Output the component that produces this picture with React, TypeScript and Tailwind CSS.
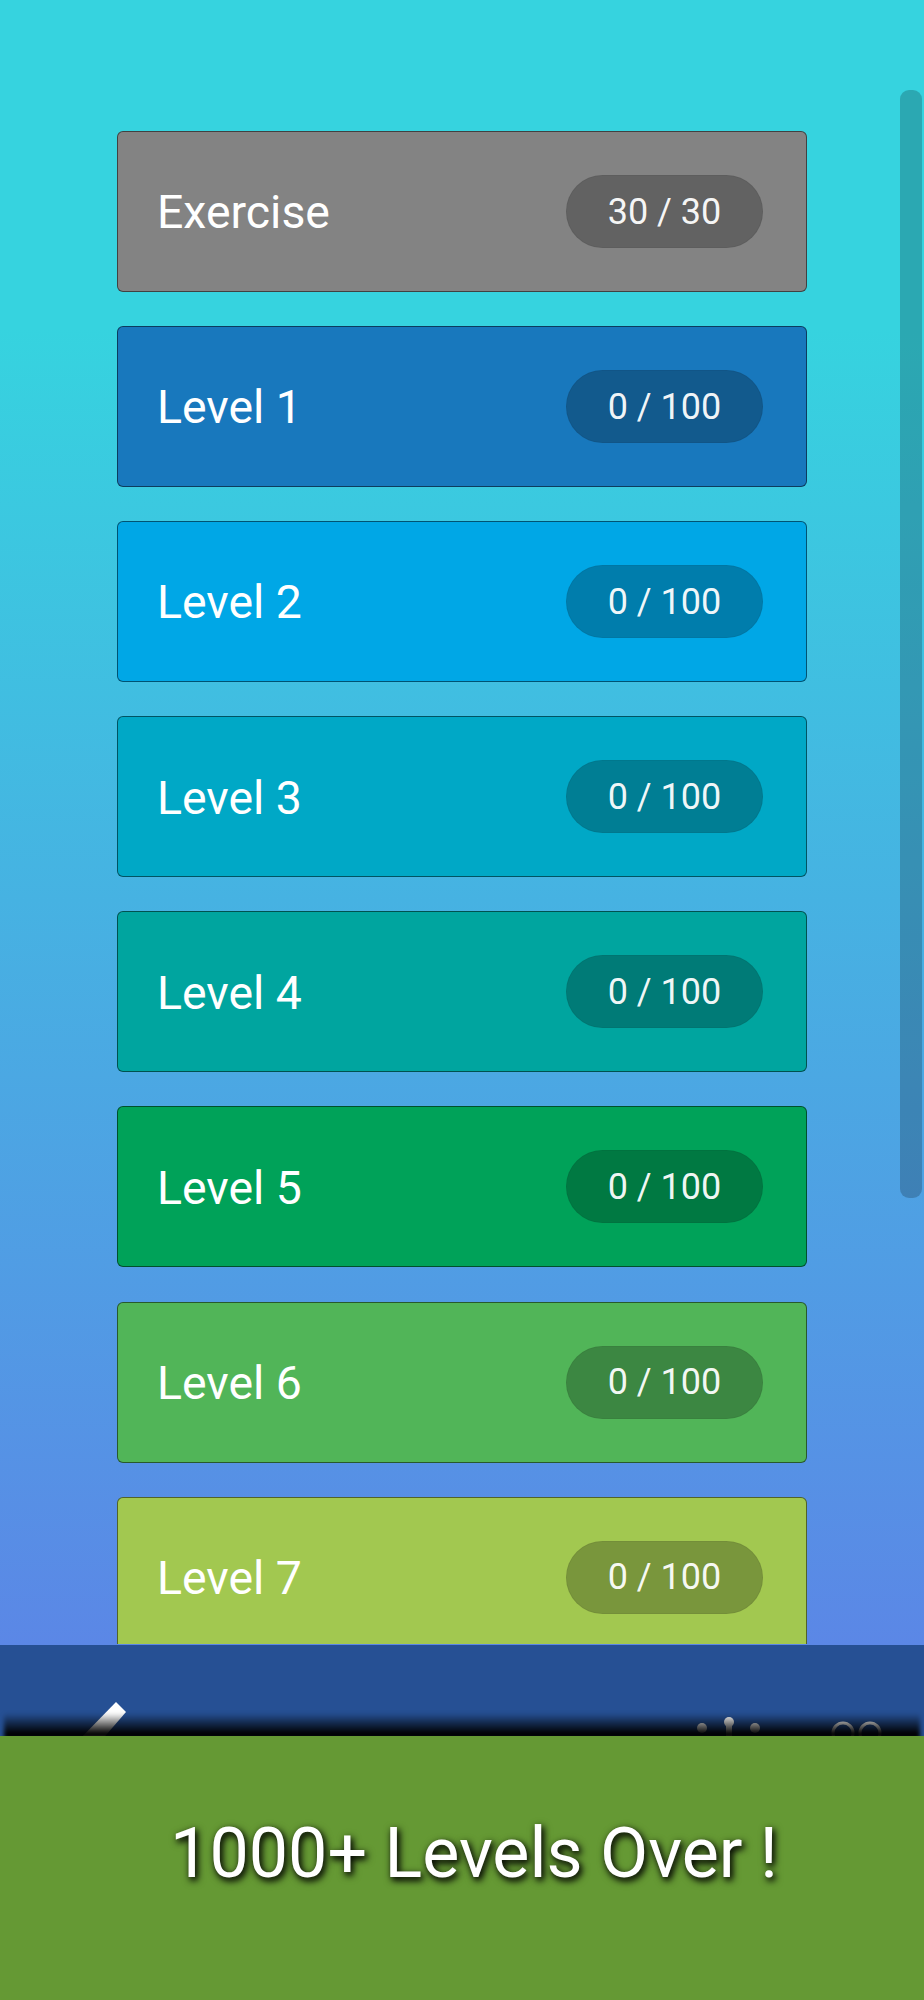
const levels = [
  { name: 'Exercise', score: '30 / 30', color: 'bg-[#838383]' },
  { name: 'Level 1', score: '0 / 100', color: 'bg-[#1878bd]' },
  { name: 'Level 2', score: '0 / 100', color: 'bg-[#00a7e6]' },
  { name: 'Level 3', score: '0 / 100', color: 'bg-[#00a8c6]' },
  { name: 'Level 4', score: '0 / 100', color: 'bg-[#00a59f]' },
  { name: 'Level 5', score: '0 / 100', color: 'bg-[#00a259]' },
  { name: 'Level 6', score: '0 / 100', color: 'bg-[#51b558]' },
  { name: 'Level 7', score: '0 / 100', color: 'bg-[#a2c850]' },
]

function LevelCard({ level }: { level: (typeof levels)[0] }) {
  return (
    <div className={`flex h-[161px] shrink-0 items-center justify-between rounded-[6px] border border-black/50 pl-[39px] pr-[43px] ${level.color}`}>
      <span className="pt-[2px] text-[46.4px] leading-none text-white">{level.name}</span>
      <span className="flex h-[73px] w-[197px] items-center justify-center rounded-full border border-black/5 bg-black/25 text-[36px] leading-none text-white/95">
        {level.score}
      </span>
    </div>
  )
}

export default function App() {
  return (
    <div className="flex h-[2000px] w-[924px] flex-col overflow-hidden font-['Roboto',sans-serif]">
      <main className="relative flex-1 overflow-hidden bg-linear-to-b/srgb from-[#36d3df] from-[20%] to-[#5b87e6]">
        <div className="h-[1644px] overflow-hidden">
          <div className="flex flex-col gap-[34.1px] pl-[117px] pr-[117px] pt-[131px]">
            {levels.map(level => <LevelCard key={level.name} level={level} />)}
          </div>
        </div>
        <div className="absolute left-[900px] top-[90px] h-[1108px] w-[22px] rounded-[9px] bg-black/20" />
      </main>

      <nav className="relative h-[91px] shrink-0 overflow-hidden bg-[#265094]">
        <svg className="absolute left-0 top-0" width="924" height="91" viewBox="0 0 924 91">
          <polygon points="116,57 126,67 100,97 77,97" fill="#fff" />
          <circle cx="702" cy="83" r="5" fill="#fff" />
          <circle cx="729" cy="77" r="5" fill="#fff" />
          <rect x="726" y="77" width="6" height="14" fill="#fff" />
          <circle cx="755" cy="83" r="5" fill="#fff" />
          <circle cx="843" cy="88" r="10" fill="none" stroke="#fff" strokeWidth="3" />
          <circle cx="870" cy="88" r="10" fill="none" stroke="#fff" strokeWidth="3" />
        </svg>
        <div className="absolute bottom-[-3px] left-[4px] right-[4px] h-[26px] bg-linear-to-b/srgb from-transparent to-black to-[80%] blur-[2px]" />
      </nav>

      <footer className="flex h-[264px] shrink-0 items-center justify-center bg-[#659934] pb-[30px] pl-[24px]">
        <span className="text-[70px] leading-none text-white [text-shadow:2px_3px_6px_rgba(0,0,0,0.9),2px_3px_8px_rgba(0,0,0,0.6)]">1000+ Levels Over !</span>
      </footer>
    </div>
  )
}
